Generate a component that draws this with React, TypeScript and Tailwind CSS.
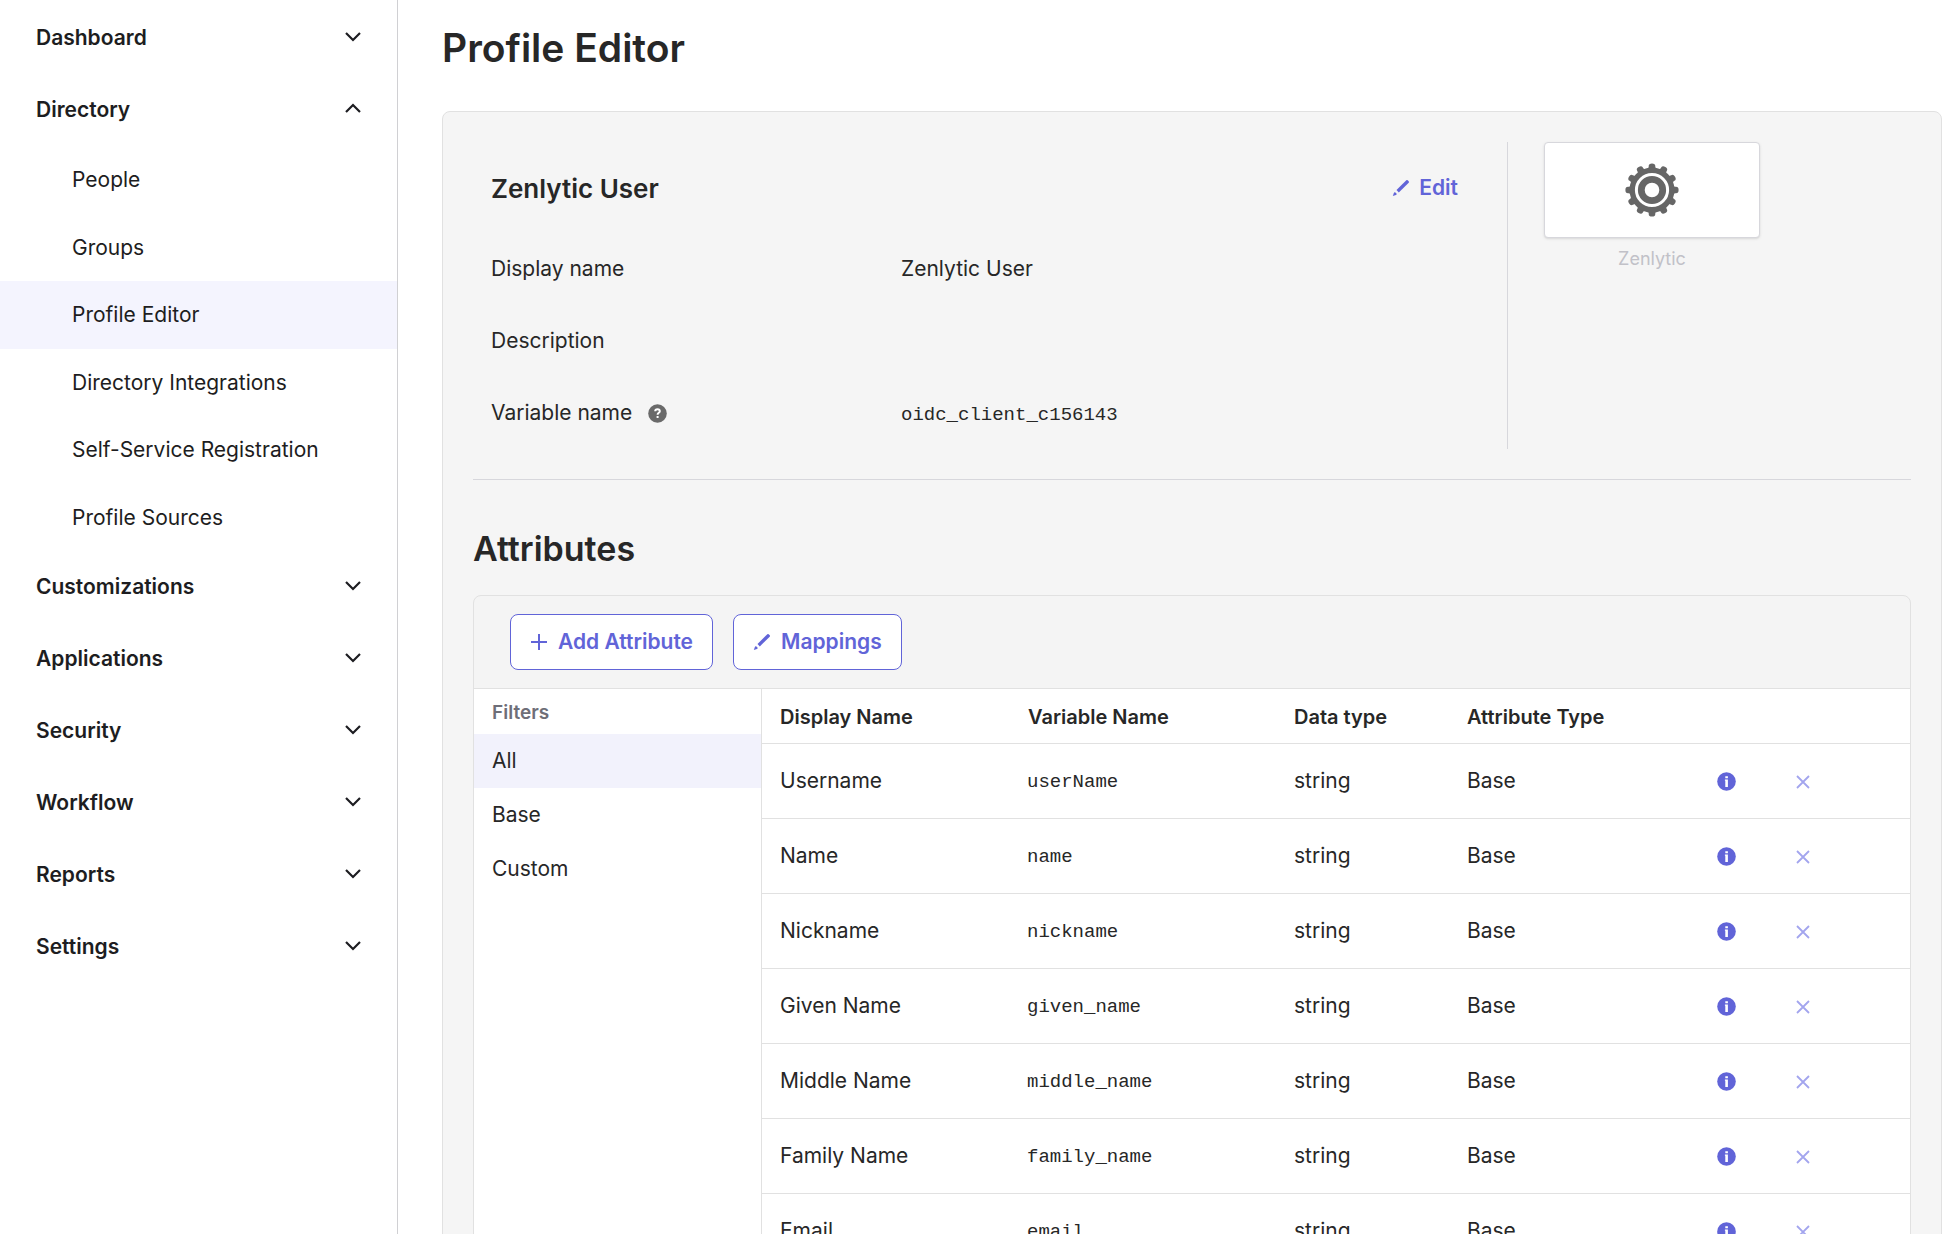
const sections = [
  { label: 'Dashboard' },
  {
    label: 'Directory',
    items: [
      'People',
      'Groups',
      'Profile Editor',
      'Directory Integrations',
      'Self-Service Registration',
      'Profile Sources',
    ],
  },
  { label: 'Customizations' },
  { label: 'Applications' },
  { label: 'Security' },
  { label: 'Workflow' },
  { label: 'Reports' },
  { label: 'Settings' },
];

const attributes = [
  { name: 'Username', variable: 'userName' },
  { name: 'Name', variable: 'name' },
  { name: 'Nickname', variable: 'nickname' },
  { name: 'Given Name', variable: 'given_name' },
  { name: 'Middle Name', variable: 'middle_name' },
  { name: 'Family Name', variable: 'family_name' },
  { name: 'Email', variable: 'email' },
];

const GEAR_TEETH = [0, 30, 60, 90, 120, 150, 180, 210, 240, 270, 300, 330];

function Chevron({ open }: { open: boolean }) {
  return (
    <svg viewBox="0 0 18 18" className="size-[18px]" fill="none" stroke="currentColor" strokeWidth="2.200" aria-hidden="true">
      <path d={open ? 'M2 11 9 4l7 7' : 'M2 4l7 7 7-7'} />
    </svg>
  );
}

function Pencil() {
  return (
    <svg viewBox="0 0 18 18" className="size-[18px]" fill="currentColor" aria-hidden="true">
      <path d="M14.300 1.300a1 1 0 0 1 1.400 0l1 1a1 1 0 0 1 0 1.400L6.800 13.400 4.500 11.100z" />
      <path d="M2.900 12.900 4.900 14.900 4 15.900.8 17 1.900 13.900z" />
    </svg>
  );
}

function Plus() {
  return (
    <svg viewBox="0 0 18 18" className="size-[18px]" fill="none" stroke="currentColor" strokeWidth="2" aria-hidden="true">
      <path d="M9 1v16M1 9h16" />
    </svg>
  );
}

function Gear() {
  return (
    <svg viewBox="0 0 54 54" className="size-[54px]" fill="#666" aria-hidden="true">
      {GEAR_TEETH.map((angle) => (
        <path key={angle} d="M20.500 9Q23.500 7 23.700 3.800V3Q23.700 .4 27 .4T30.300 3V3.800Q30.500 7 33.500 9z" transform={`rotate(${angle} 27 27)`} />
      ))}
      <circle cx="27" cy="27" r="19.800" fill="none" stroke="#666" strokeWidth="5.400" />
      <circle cx="27" cy="27" r="10.700" fill="none" stroke="#666" strokeWidth="6.800" />
    </svg>
  );
}

function Info() {
  return (
    <svg viewBox="0 0 19 19" className="size-[19px]" aria-hidden="true">
      <circle cx="9.500" cy="9.500" r="9.300" fill="#6164d8" />
      <path fill="#fff" d="M8.300 4.200h2.600v2H8.300zM7.900 7.500h3v7.400H8.300V8.700h-.4z" />
    </svg>
  );
}

function Help() {
  return (
    <svg viewBox="0 0 19 19" className="size-[19px]" aria-hidden="true">
      <circle cx="9.500" cy="9.500" r="9.300" fill="#6a6a6a" />
      <path fill="none" stroke="#fff" strokeWidth="2" d="M7.200 7.300c0-2.800 4.600-2.700 4.600-.1 0 1.700-2.200 1.600-2.200 3.600" />
      <path fill="#fff" d="M8.600 12h2v2h-2z" />
    </svg>
  );
}

function Sidebar() {
  return (
    <nav aria-label="Main" className="w-[398px] shrink-0 border-r border-[#d0d0d3] pt-0.5 text-[#1d1d21]">
      {sections.map(({ label, items }) => (
        <div key={label}>
          <button type="button" aria-expanded={!!items} className="flex h-[72px] w-full items-center justify-between pr-[35px] pl-9 text-left font-semibold">
            {label}
            <Chevron open={!!items} />
          </button>
          {items && (
            <ul className="grid h-[405px] grid-rows-6">
              {items.map((item) => (
                <li key={item}>
                  <a
                    href="#"
                    aria-current={item === 'Profile Editor' ? 'page' : undefined}
                    className="flex h-full items-center pl-[72px] aria-[current=page]:bg-[#f4f4fe]"
                  >
                    {item}
                  </a>
                </li>
              ))}
            </ul>
          )}
        </div>
      ))}
    </nav>
  );
}

function ProfileSummary() {
  return (
    <div className="flex border-b border-[#d7d7dc] pb-[30px]">
      <div className="flex-1 border-r border-[#d7d7dc] px-[18px] pt-[18px]">
        <div className="flex h-14 items-center justify-between pr-[31px]">
          <h2 className="text-[26px] font-semibold">Zenlytic User</h2>
          <button type="button" className="flex items-center gap-[9px] font-semibold text-[#6164d8]">
            <Pencil />
            Edit
          </button>
        </div>
        <dl className="grid grid-cols-[410px_1fr] pt-[17px]">
          <dt className="flex h-[72px] items-center">Display name</dt>
          <dd className="flex h-[72px] items-center">Zenlytic User</dd>
          <dt className="flex h-[72px] items-center">Description</dt>
          <dd />
          <dt className="flex h-[72px] items-center gap-4">
            Variable name
            <button type="button" aria-label="About variable name">
              <Help />
            </button>
          </dt>
          <dd className="flex h-[72px] items-center pt-1 font-['Liberation_Mono',monospace] text-[19px]">oidc_client_c156143</dd>
        </dl>
      </div>
      <div className="w-[403px] pl-9">
        <figure className="w-[216px]">
          <div className="flex h-[96px] items-center justify-center rounded-sm border border-[#d7d7dc] bg-white shadow-sm">
            <Gear />
          </div>
          <figcaption className="pt-[7px] text-center text-lg text-[#c1c1c8]">Zenlytic</figcaption>
        </figure>
      </div>
    </div>
  );
}

function AttributesTable() {
  return (
    <table className="w-full table-fixed border-collapse text-left">
      <colgroup>
        <col className="w-[249px]" />
        <col className="w-[265px]" />
        <col className="w-[173px]" />
        <col className="w-[233px]" />
        <col />
      </colgroup>
      <thead>
        <tr className="h-[54px] border-b border-[#e1e1e1] text-xl">
          <th className="pt-0.5 pl-[18px] font-semibold">Display Name</th>
          <th className="pt-0.5 pl-[17px] font-semibold">Variable Name</th>
          <th className="pt-0.5 pl-[18px] font-semibold">Data type</th>
          <th className="pt-0.5 pl-[18px] font-semibold">Attribute Type</th>
          <td />
        </tr>
      </thead>
      <tbody>
        {attributes.map(({ name, variable }) => (
          <tr key={name} className="h-[75px] border-b border-[#e1e1e1]">
            <td className="pl-[18px]">{name}</td>
            <td className="pt-1 pl-4 font-['Liberation_Mono',monospace] text-[19px]">{variable}</td>
            <td className="pl-[18px]">string</td>
            <td className="pl-[18px]">Base</td>
            <td>
              <div className="flex items-center gap-[60px] pt-0.5 pl-[35px]">
                <button type="button" aria-label={`${name} details`}>
                  <Info />
                </button>
                <button type="button" aria-label={`Remove ${name}`}>
                  <svg viewBox="0 0 14 14" className="size-[14px]" fill="none" stroke="#a3a5ee" strokeWidth="1.800" aria-hidden="true">
                    <path d="m1 1 12 12M13 1 1 13" />
                  </svg>
                </button>
              </div>
            </td>
          </tr>
        ))}
      </tbody>
    </table>
  );
}

export default function App() {
  return (
    <div className="flex h-screen overflow-hidden bg-white font-['Inter',sans-serif] text-[21px] text-[#272727]">
      <Sidebar />
      <main className="min-w-0 flex-1 pt-5 pr-1.5 pl-11">
        <h1 className="text-[39px] leading-14 font-semibold">Profile Editor</h1>
        <section className="mt-[35px] rounded-lg border border-[#e1e1e1] bg-[#f5f5f5] px-[30px] pt-[30px] pb-[30px]">
          <ProfileSummary />
          <h2 className="pt-[45px] text-[34px] leading-12 font-semibold">Attributes</h2>
          <div className="mt-[22px] overflow-hidden rounded-lg border border-[#e1e1e1] bg-[#f4f4f4]">
            <div className="flex gap-5 border-b border-[#e1e1e1] py-[18px] pl-9 font-semibold text-[#6164d8]">
              <button type="button" className="flex h-14 items-center gap-2.5 rounded-lg border border-[#6164d8] bg-white px-[19px]">
                <Plus />
                Add Attribute
              </button>
              <button type="button" className="flex h-14 items-center gap-2.5 rounded-lg border border-[#6164d8] bg-white px-[19px]">
                <Pencil />
                Mappings
              </button>
            </div>
            <div className="flex bg-white">
              <div className="w-[288px] shrink-0 border-r border-[#e1e1e1]">
                <h3 className="flex h-[45px] items-center px-[18px] pt-[3px] text-[19px] font-semibold text-[#6e6e78]">Filters</h3>
                <ul>
                  <li>
                    <button type="button" aria-pressed="true" className="h-[54px] w-full bg-[#f2f2fc] px-[18px] text-left">All</button>
                  </li>
                  <li>
                    <button type="button" aria-pressed="false" className="h-[54px] w-full px-[18px] text-left">Base</button>
                  </li>
                  <li>
                    <button type="button" aria-pressed="false" className="h-[54px] w-full px-[18px] text-left">Custom</button>
                  </li>
                </ul>
              </div>
              <div className="min-w-0 flex-1">
                <AttributesTable />
              </div>
            </div>
          </div>
        </section>
      </main>
    </div>
  );
}
